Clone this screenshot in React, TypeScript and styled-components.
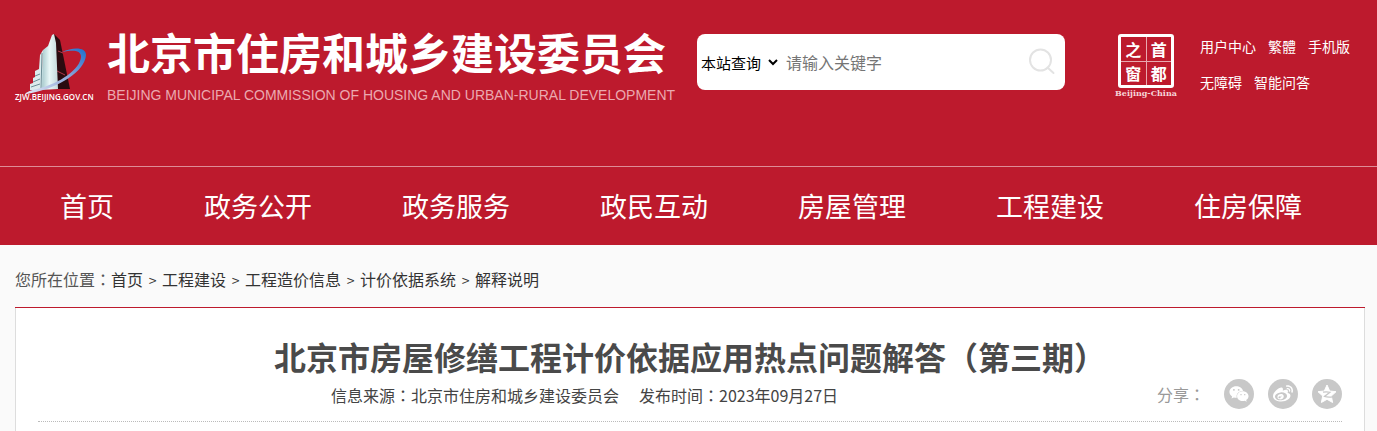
import React from 'react';
import styled, { createGlobalStyle } from 'styled-components';
import { FaWeixin, FaWeibo } from 'react-icons/fa';

const RED = '#bd1a2d';

const GlobalStyle = createGlobalStyle`
  *, *::before, *::after { box-sizing: border-box; }
  body {
    margin: 0;
    background: #fafafa;
    color: #444;
    font-family: "Noto Sans CJK SC", "Liberation Sans", sans-serif;
    font-size: 16px;
    line-height: 24px;
  }
  a { color: inherit; text-decoration: none; }
  h1, p, ul, ol { margin: 0; padding: 0; }
  ul, ol { list-style: none; }
`;

const Banner = styled.header`
  background: ${RED};
  color: #fff;
`;

const BannerTop = styled.div`
  display: flex;
  align-items: flex-start;
  min-height: 166px;
  padding: 28px 27px 0 15px;
`;

const Brand = styled.a`
  display: flex;
  flex: none;
  gap: 12px;
`;

const BrandMark = styled.svg`
  width: 80px;
  height: 70px;
  margin-top: 5px;
  overflow: visible;
`;

const BrandText = styled.span`
  display: flex;
  flex-direction: column;
`;

const BrandName = styled.strong`
  font-size: 43px;
  line-height: 46px;
  font-weight: 700;
  white-space: nowrap;
`;

const BrandEnglish = styled.span`
  color: #eba9b0;
  font-family: "Liberation Sans", sans-serif;
  font-size: 14px;
  line-height: 42px;
  white-space: nowrap;
`;

const Search = styled.form`
  display: flex;
  align-items: center;
  flex: none;
  width: 368px;
  height: 56px;
  margin: 6px 0 0 22px;
  padding-right: 8px;
  border-radius: 8px;
  background: #fff;
`;

const Scope = styled.select`
  flex: none;
  width: 84px;
  height: 54px;
  border: 0;
  background: transparent;
  color: #000;
  font-family: inherit;
  font-size: 15px;
`;

const Keyword = styled.input`
  flex: 1;
  min-width: 0;
  height: 54px;
  padding: 0 0 0 5px;
  border: 0;
  background: transparent;
  font-family: inherit;
  font-size: 16px;
  &::placeholder { color: #757575; }
`;

const SearchButton = styled.button`
  display: flex;
  padding: 0;
  border: 0;
  background: transparent;
  svg { width: 30px; height: 30px; }
`;

const Portal = styled.div`
  display: flex;
  gap: 23px;
  margin-left: auto;
`;

const Seal = styled.a`
  display: flex;
  flex-direction: column;
  align-items: center;
  width: 62px;
  padding-top: 6px;
`;

const SealGrid = styled.span`
  display: grid;
  grid-template-columns: 1fr 1fr;
  gap: 1px;
  width: 56px;
  height: 54px;
  border: 3px solid #fff;
  border-radius: 3px;
  background: #e9a8af;
`;

const SealCell = styled.span`
  display: flex;
  align-items: center;
  justify-content: center;
  background: ${RED};
  font-size: 16px;
  line-height: 16px;
  font-weight: 700;
`;

const SealCaption = styled.span`
  color: #f6d5d8;
  font-family: "DejaVu Serif", serif;
  font-size: 8px;
  line-height: 10px;
  font-weight: 700;
  white-space: nowrap;
`;

const QuickLinks = styled.ul`
  display: flex;
  flex-wrap: wrap;
  align-content: flex-start;
  column-gap: 12px;
  width: 150px;
  font-size: 14px;
  line-height: 36px;
  white-space: nowrap;
`;

const Nav = styled.nav`
  border-top: 1px solid #de8c96;
`;

const NavList = styled.ul`
  display: flex;
  padding: 0 15px;
  font-size: 27px;
  line-height: 78px;
  white-space: nowrap;
`;

const NavLink = styled.a`
  display: block;
  padding: 0 45px;
`;

const Main = styled.main`
  padding: 0 12px 0 15px;
`;

const Crumbs = styled.nav`
  display: flex;
  padding: 22px 0 15px;
  color: #555;
  white-space: nowrap;
  ol { display: flex; }
`;

const Crumb = styled.li`
  color: #333;
  & + &::before {
    content: ">";
    display: inline-block;
    width: 19px;
    text-align: center;
    font-size: 14px;
  }
`;

/* Full-width punctuation set in the middle of its square. */
const Mark = styled.span`
  font-family: "Noto Sans CJK TC", sans-serif;
`;

const Article = styled.article`
  padding: 0 22px 24px;
  border: solid #ddd;
  border-width: 0 1px 1px;
  background: #fff;
`;

const ArticleRule = styled.div`
  height: 1px;
  background: ${RED};
`;

const ArticleHead = styled.div`
  padding-top: 25px;
  border-bottom: 1px dotted #bbb;
`;

const Title = styled.h1`
  color: #4a4a4a;
  font-size: 32px;
  line-height: 46px;
  text-align: center;
  white-space: nowrap;
`;

const MetaRow = styled.div`
  display: flex;
  align-items: center;
  height: 42px;
`;

const Meta = styled.p`
  display: flex;
  flex: 1;
  justify-content: center;
  gap: 20px;
  padding-bottom: 10px;
  white-space: nowrap;
`;

const Share = styled.div`
  display: flex;
  align-items: center;
  gap: 14px;
  padding: 0 0 13px 26px;
  color: #999;
`;

const ShareLabel = styled.span`
  width: 53px;
  white-space: nowrap;
`;

const ShareButton = styled.button`
  display: flex;
  align-items: center;
  justify-content: center;
  width: 30px;
  height: 30px;
  padding: 0;
  border: 0;
  border-radius: 50%;
  background: #c8c8c8;
  color: #fff;
  svg { width: 20px; height: 20px; }
`;

const TowerMark = () => (
  <BrandMark viewBox="0 0 80 70" aria-hidden="true">
    <defs>
      <linearGradient id="tower" x1="0" x2="1">
        <stop offset="0" stopColor="#9fc4c8" />
        <stop offset="0.5" stopColor="#e8f7f7" />
        <stop offset="1" stopColor="#c3d8da" />
      </linearGradient>
      <linearGradient id="orbit" x1="0" y1="1" x2="1" y2="0">
        <stop offset="0" stopColor="#e4e8f6" />
        <stop offset="0.55" stopColor="#8da6d8" />
        <stop offset="1" stopColor="#1c6fce" />
      </linearGradient>
    </defs>
    <path d="M39 1 45 7 55 56 42 56Z" fill="#2a0b10" />
    <path d="M43 18 48 20M42 38 50 42" stroke="#b3384a" strokeWidth="1" />
    <path d="M37 2 39 1 41 10 43 56 26 57 28 17 33 13Z" fill="url(#tower)" />
    <path d="M28 17 27 57 15 57 15 51 18 50 18 45 20 44 20 38 24 36 25 22Z" fill="#dcebed" />
    <path d="M27 20 26 56M20 43 25 41M18 49 25 46M16 54 25 51" stroke="#6c8f98" strokeWidth="1" />
    <path d="M47 19C58 14 71 14 71 22C70 38 45 55 12 61C7 62 14 57 22 56C46 50 65 36 66 24C66 17 58 17 47 19Z" fill="url(#orbit)" />
    <text x="0" y="67" fontFamily="Open Sans, sans-serif" fontSize="8" fontWeight="600" fill="#fff">ZJW.BEIJING.GOV.CN</text>
  </BrandMark>
);

const QzoneIcon = () => (
  <svg viewBox="0 0 20 20" aria-hidden="true">
    <path d="M10 1 12.7 7 19 7.7 14.3 12 15.6 18.5 10 15.3 4.4 18.5 5.7 12 1 7.7 7.3 7Z" fill="#fff" stroke="#fff" strokeLinejoin="round" />
    <path d="M6 8.2Q10 7.5 13 8.3L7.5 12.4Q11 13.6 15.5 12.8" fill="none" stroke="#c8c8c8" strokeWidth="1.2" />
  </svg>
);

const quickLinks = ['用户中心', '繁體', '手机版', '无障碍', '智能问答'];
const sections = ['首页', '政务公开', '政务服务', '政民互动', '房屋管理', '工程建设', '住房保障'];
const trail = ['首页', '工程建设', '工程造价信息', '计价依据系统', '解释说明'];

export default function App() {
  return (
    <>
      <GlobalStyle />
      <Banner>
        <BannerTop>
          <Brand href="#">
            <TowerMark />
            <BrandText>
              <BrandName>北京市住房和城乡建设委员会</BrandName>
              <BrandEnglish>BEIJING MUNICIPAL COMMISSION OF HOUSING AND URBAN-RURAL DEVELOPMENT</BrandEnglish>
            </BrandText>
          </Brand>
          <Search onSubmit={(e) => e.preventDefault()}>
            <Scope aria-label="查询范围">
              <option>本站查询</option>
            </Scope>
            <Keyword type="text" aria-label="关键字" placeholder="请输入关键字" />
            <SearchButton type="submit" aria-label="搜索">
              <svg viewBox="0 0 30 30" fill="none" stroke="#e3e3e3" strokeWidth="2">
                <circle cx="13.5" cy="13" r="10.5" />
                <path d="M20.5 20.5 26.5 26" strokeLinecap="round" />
              </svg>
            </SearchButton>
          </Search>
          <Portal>
            <Seal href="#">
              <SealGrid>
                {['之', '首', '窗', '都'].map((c) => (
                  <SealCell key={c}>{c}</SealCell>
                ))}
              </SealGrid>
              <SealCaption>Beijing-China</SealCaption>
            </Seal>
            <QuickLinks>
              {quickLinks.map((label) => (
                <li key={label}><a href="#">{label}</a></li>
              ))}
            </QuickLinks>
          </Portal>
        </BannerTop>
        <Nav aria-label="主导航">
          <NavList>
            {sections.map((label) => (
              <li key={label}><NavLink href="#">{label}</NavLink></li>
            ))}
          </NavList>
        </Nav>
      </Banner>
      <Main>
        <Crumbs aria-label="位置">
          <span>您所在位置<Mark>：</Mark></span>
          <ol>
            {trail.map((label) => (
              <Crumb key={label}><a href="#">{label}</a></Crumb>
            ))}
          </ol>
        </Crumbs>
        <ArticleRule />
        <Article>
          <ArticleHead>
            <Title>北京市房屋修缮工程计价依据应用热点问题解答<Mark>（</Mark>第三期<Mark>）</Mark></Title>
            <MetaRow>
              <Meta>
                <span>信息来源<Mark>：</Mark>北京市住房和城乡建设委员会</span>
                <span>发布时间<Mark>：</Mark>2023年09月27日</span>
              </Meta>
              <Share>
                <ShareLabel>分享<Mark>：</Mark></ShareLabel>
                <ShareButton type="button" aria-label="分享到微信"><FaWeixin /></ShareButton>
                <ShareButton type="button" aria-label="分享到微博"><FaWeibo /></ShareButton>
                <ShareButton type="button" aria-label="分享到QQ空间"><QzoneIcon /></ShareButton>
              </Share>
            </MetaRow>
          </ArticleHead>
        </Article>
      </Main>
    </>
  );
}
